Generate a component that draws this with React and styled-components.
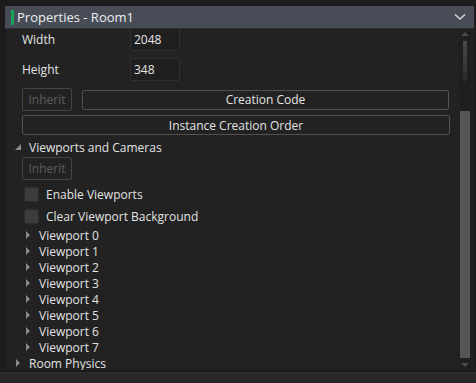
import React from "react";
import styled, { createGlobalStyle } from "styled-components";

const GlobalStyle = createGlobalStyle`
  html, body {
    margin: 0;
    padding: 0;
    background: #1c1c1c;
  }
  body {
    font-family: "Open Sans", "Noto Sans", sans-serif;
    color: #dedede;
  }
`;

const viewports = [0, 1, 2, 3, 4, 5, 6, 7];

const App = () => {
  return (
    <Window>
      <GlobalStyle />
      <TopStrip />
      <Panel>
        <Header>
          <Accent />
          <Title>Properties - Room1</Title>
          <svg width="12" height="8" viewBox="0 0 12 8" style={{ marginRight: 8 }}>
            <path d="M1 1.5 L6 6 L11 1.5" stroke="#d4d6da" strokeWidth="1.6" fill="none" />
          </svg>
        </Header>
        <Body>
          <Content>
            <Scroller>
              <FieldRow>
                <Label>Width</Label>
                <ValueBox>2048</ValueBox>
              </FieldRow>
              <FieldRow>
                <Label>Height</Label>
                <ValueBox>348</ValueBox>
              </FieldRow>
              <ButtonRow>
                <SmallButton disabled>Inherit</SmallButton>
                <WideButton>Creation Code</WideButton>
              </ButtonRow>
              <FullButton>Instance Creation Order</FullButton>
              <SectionItem>
                <Arrow $open />
                <span>Viewports and Cameras</span>
              </SectionItem>
              <InheritRow>
                <SmallButton disabled>Inherit</SmallButton>
              </InheritRow>
              <CheckRow $first>
                <CheckBox />
                <span>Enable Viewports</span>
              </CheckRow>
              <CheckRow>
                <CheckBox />
                <span>Clear Viewport Background</span>
              </CheckRow>
              {viewports.map((n) => (
                <TreeItem key={n} $indent={10}>
                  <Arrow />
                  <span>Viewport {n}</span>
                </TreeItem>
              ))}
              <TreeItem $indent={0}>
                <Arrow />
                <span>Room Physics</span>
              </TreeItem>
            </Scroller>
          </Content>
          <ScrollBar>
            <ScrollArrow viewBox="0 0 10 6">
              <path d="M1 5 L5 1 L9 5 Z" fill="#4a4a4a" />
            </ScrollArrow>
            <Track>
              <TrackLine />
              <Thumb />
            </Track>
            <ScrollArrow viewBox="0 0 10 6">
              <path d="M1 1 L5 5 L9 1 Z" fill="#4a4a4a" />
            </ScrollArrow>
          </ScrollBar>
        </Body>
      </Panel>
      <BottomStrip />
    </Window>
  );
};

export default App;

const Window = styled.div`
  width: 476px;
  height: 383px;
  display: flex;
  flex-direction: column;
  overflow: hidden;
  background: #1c1c1c;
`;

const TopStrip = styled.div`
  height: 6px;
  background: #1c1c1c;
  flex-shrink: 0;
`;

const Panel = styled.div`
  margin: 0 2px 0 5px;
  display: flex;
  flex-direction: column;
  height: 366px;
  flex-shrink: 0;
`;

const Header = styled.div`
  height: 22px;
  background: #474c56;
  display: flex;
  align-items: center;
  flex-shrink: 0;
  border-bottom: 1px solid #2e3138;
`;

const Accent = styled.div`
  width: 3px;
  height: 15px;
  background: #17a35a;
  margin-left: 6px;
`;

const Title = styled.div`
  flex: 1;
  margin-left: 3px;
  font-size: 13px;
  color: #eceef0;
`;

const Body = styled.div`
  flex: 1;
  display: flex;
  background: #222222;
  border-left: 1px solid #1a1a1a;
  border-bottom: 2px solid #1a1a1a;
  min-height: 0;
`;

const Content = styled.div`
  flex: 1;
  overflow: hidden;
  padding: 0 10px 0 16px;
`;

const Scroller = styled.div`
  margin-top: -1px;
  display: flex;
  flex-direction: column;
`;

const Label = styled.div`
  width: 108px;
  font-size: 12px;
  color: #e2e2e2;
`;

const FieldRow = styled.div`
  display: flex;
  align-items: center;
  height: 23px;
  margin-bottom: 7px;
`;

const ValueBox = styled.div`
  box-sizing: border-box;
  width: 50px;
  height: 23px;
  border: 1px solid #303030;
  border-radius: 2px;
  background: #1f1f1f;
  padding-left: 3px;
  display: flex;
  align-items: center;
  font-size: 12px;
  color: #e6e6e6;
`;

const ButtonBase = styled.button`
  box-sizing: border-box;
  background: #222222;
  border: 1px solid #525252;
  border-radius: 2px;
  font-family: "Open Sans", "Noto Sans", sans-serif;
  font-size: 12px;
  color: #e4e4e4;
  padding: 0;
  display: flex;
  align-items: center;
  justify-content: center;
`;

const SmallButton = styled(ButtonBase)`
  width: 50px;
  height: 23px;
  color: #5e5e5e;
  border-color: #444444;
`;

const WideButton = styled(ButtonBase)`
  flex: 1;
  height: 20px;
`;

const FullButton = styled(ButtonBase)`
  width: 428px;
  height: 20px;
  margin-top: 4px;
`;

const ButtonRow = styled.div`
  display: flex;
  align-items: center;
  gap: 10px;
  height: 23px;
`;

const InheritRow = styled.div`
  display: flex;
  height: 23px;
`;

const SectionItem = styled.div`
  display: flex;
  align-items: center;
  height: 20px;
  margin: 2px 0 0 -7px;
  font-size: 12px;
  color: #e2e2e2;
`;

const TreeItem = styled.div`
  display: flex;
  align-items: center;
  height: 16px;
  margin-left: ${(p) => p.$indent - 7}px;
  font-size: 12px;
  color: #e2e2e2;
`;

const Arrow = styled.span`
  width: 0;
  height: 0;
  margin-right: ${(p) => (p.$open ? "8px" : "9px")};
  margin-left: ${(p) => (p.$open ? "0" : "1px")};
  ${(p) =>
    p.$open
      ? `border-left: 6px solid transparent; border-bottom: 6px solid #8a8a8a;`
      : `border-top: 4px solid transparent; border-bottom: 4px solid transparent; border-left: 4px solid #8a8a8a;`}
`;

const CheckRow = styled.div`
  display: flex;
  align-items: center;
  height: 22px;
  font-size: 12px;
  color: #e2e2e2;
  margin-left: 2px;
  margin-top: ${(p) => (p.$first ? "3px" : "0")};
`;

const CheckBox = styled.span`
  width: 15px;
  height: 15px;
  background: #3c3c3c;
  border: 1px solid #2c2c2c;
  border-radius: 2px;
  margin-right: 7px;
  box-sizing: border-box;
`;

const ScrollBar = styled.div`
  width: 12px;
  margin-right: 3px;
  background: #1f1f1f;
  display: flex;
  flex-direction: column;
  align-items: center;
  padding: 2px 0;
`;

const ScrollArrow = styled.svg`
  width: 10px;
  height: 6px;
  flex-shrink: 0;
`;

const Track = styled.div`
  flex: 1;
  width: 100%;
  display: flex;
  flex-direction: column;
  align-items: center;
  padding: 4px 0;
`;

const TrackLine = styled.div`
  width: 4px;
  height: 40px;
  flex-shrink: 0;
  background: linear-gradient(#4a4a4a, #2a2a2a);
`;

const Thumb = styled.div`
  width: 10px;
  margin-top: 30px;
  flex: 1;
  background: #565656;
`;

const BottomStrip = styled.div`
  flex: 1;
  background: #282828;
  border-top: 1px solid #303030;
`;
